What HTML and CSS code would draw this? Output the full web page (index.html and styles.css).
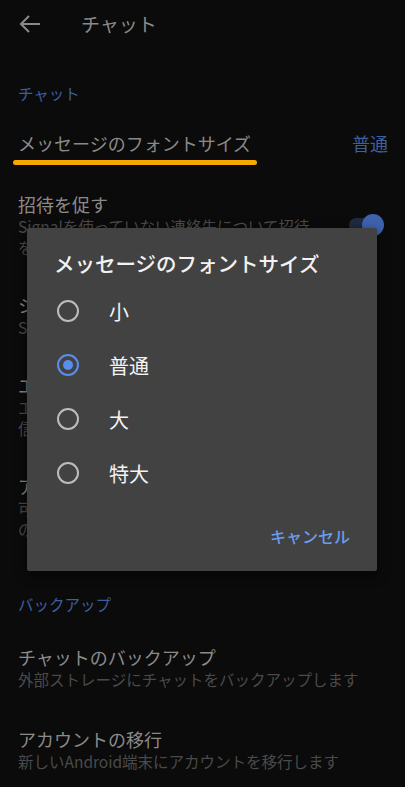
FILE: index.html
```html
<!DOCTYPE html>
<html lang="ja">
<head>
  <meta charset="UTF-8">
  <title>チャット</title>
  <link rel="stylesheet" href="styles.css">
</head>
<body>
  <div class="screen">
    <div class="appbar">
      <svg class="back" width="22" height="20" viewBox="0 0 22 20">
        <path d="M21 10H2 M10 2L2 10L10 18" fill="none" stroke="#8a8a8a" stroke-width="2"/>
      </svg>
      <span class="appbar-title">チャット</span>
    </div>

    <div class="section">チャット</div>

    <div class="item item-first">
      <div class="item-text">
        <div class="item-title"><span class="marked">メッセージのフォントサイズ</span></div>
      </div>
      <div class="item-value">普通</div>
    </div>

    <div class="item">
      <div class="item-text">
        <div class="item-title">招待を促す</div>
        <div class="item-sub narrow">Signalを使っていない連絡先について招待を促します</div>
      </div>
      <div class="toggle on"><span class="thumb"></span></div>
    </div>

    <div class="item">
      <div class="item-text">
        <div class="item-title">システム絵文字を使用</div>
        <div class="item-sub">Signal内蔵の絵文字サポートを無効にします</div>
      </div>
    </div>

    <div class="item">
      <div class="item-text">
        <div class="item-title">エンターキーで送信</div>
        <div class="item-sub">エンターキーを押すとテキストメッセージが送<br>信されます</div>
      </div>
    </div>

    <div class="item">
      <div class="item-text">
        <div class="item-title">アドレス帳の写真を使用</div>
        <div class="item-sub">可能な場合は、アドレス帳にある連絡先の写真<br>の代わりに表示します</div>
      </div>
    </div>

    <div class="section section-gap">バックアップ</div>

    <div class="item">
      <div class="item-text">
        <div class="item-title">チャットのバックアップ</div>
        <div class="item-sub">外部ストレージにチャットをバックアップします</div>
      </div>
    </div>

    <div class="item item-last">
      <div class="item-text">
        <div class="item-title">アカウントの移行</div>
        <div class="item-sub">新しいAndroid端末にアカウントを移行します</div>
      </div>
    </div>

    <div class="dialog">
      <div class="dialog-title">メッセージのフォントサイズ</div>
      <div class="options">
        <div class="option"><span class="radio"></span><span class="option-label">小</span></div>
        <div class="option"><span class="radio checked"></span><span class="option-label">普通</span></div>
        <div class="option"><span class="radio"></span><span class="option-label">大</span></div>
        <div class="option"><span class="radio"></span><span class="option-label">特大</span></div>
      </div>
      <div class="dialog-actions">
        <button class="text-btn">キャンセル</button>
      </div>
    </div>
  </div>
</body>
</html>
```

FILE: styles.css
```css
body {
  margin: 0;
  background: #0b0b0b;
  font-family: "Noto Sans CJK JP", "Noto Sans", sans-serif;
}

.screen {
  position: relative;
  width: 405px;
  height: 787px;
  overflow: hidden;
  background: #0b0b0b;
}

.appbar {
  height: 46px;
  display: flex;
  align-items: center;
  padding-left: 19px;
}

.back {
  margin-top: 2px;
}

.appbar-title {
  margin-left: 40px;
  font-size: 19px;
  color: #8a8a8a;
}

.section {
  margin-top: 36px;
  padding: 0 18px 9px;
  font-size: 15.5px;
  line-height: 22px;
  color: #3d5f9f;
}

.section-gap {
  padding-bottom: 12px;
}

.item {
  display: flex;
  align-items: center;
  padding: 18px 17px 17px 18px;
}

.item-first {
  padding-top: 17px;
  padding-bottom: 18px;
}

.item-last {
  padding-top: 20px;
}

.item-text {
  flex: 1;
}

.item-title {
  font-size: 18px;
  line-height: 24px;
  color: #8a8a8a;
}

.item-sub {
  font-size: 15.5px;
  line-height: 21px;
  color: #4a4a4a;
  white-space: nowrap;
}

.item-sub.narrow {
  max-width: 305px;
  white-space: normal;
}

.marked {
  position: relative;
}

.marked::after {
  content: "";
  position: absolute;
  left: -5px;
  right: -6px;
  bottom: -9px;
  height: 5px;
  border-radius: 3px;
  background: #f5a900;
}

.item-value {
  font-size: 18px;
  color: #3d5f9f;
}

.toggle {
  position: relative;
  width: 34px;
  height: 14px;
  margin-right: 5px;
  border-radius: 7px;
  background: #1f2a40;
}

.toggle .thumb {
  position: absolute;
  top: -4px;
  left: -2px;
  width: 22px;
  height: 22px;
  border-radius: 50%;
  background: #3a3a3a;
}

.toggle.on .thumb {
  left: 13px;
  background: #3e62ae;
}

.dialog {
  position: absolute;
  left: 27px;
  top: 228px;
  width: 350px;
  height: 343px;
  box-sizing: border-box;
  padding: 21px 0 17px;
  background: #424242;
  border-radius: 2px;
  box-shadow: 0 4px 12px rgba(0, 0, 0, 0.6);
  display: flex;
  flex-direction: column;
}

.dialog-title {
  padding-left: 27px;
  font-size: 20.5px;
  line-height: 28px;
  font-weight: 500;
  color: #f2f2f2;
}

.options {
  margin-top: 7px;
}

.option {
  height: 54px;
  display: flex;
  align-items: center;
  padding-left: 30px;
}

.radio {
  width: 18px;
  height: 18px;
  border: 2px solid #bdbdbd;
  border-radius: 50%;
  display: flex;
  align-items: center;
  justify-content: center;
}

.radio.checked {
  border-color: #5b8def;
}

.radio.checked::after {
  content: "";
  width: 10px;
  height: 10px;
  border-radius: 50%;
  background: #5b8def;
}

.option-label {
  margin-left: 30px;
  font-size: 20px;
  color: #f2f2f2;
}

.dialog-actions {
  margin-top: auto;
  display: flex;
  justify-content: flex-end;
  padding-right: 19px;
}

.text-btn {
  height: 36px;
  padding: 0 8px;
  border: none;
  background: none;
  font-family: inherit;
  font-size: 16px;
  font-weight: 500;
  color: #6a9cf0;
}
```
